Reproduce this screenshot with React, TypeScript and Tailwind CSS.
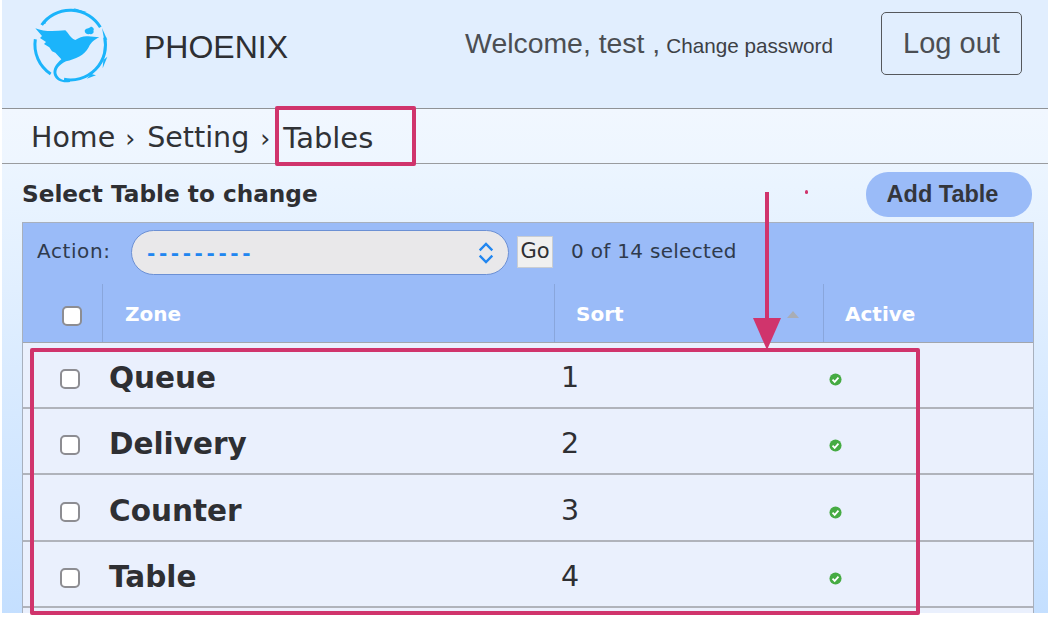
import React from "react";

const SANS = "font-['Liberation_Sans',Arial,sans-serif]";
const DEJA = "font-['DejaVu_Sans',Verdana,sans-serif]";

function Logo() {
  return (
    <svg viewBox="0 0 300 285" className="w-[100px] h-[95px] shrink-0 self-start" aria-hidden="true">
      <g fill="none" stroke="#1bb4fb" strokeWidth="9">
        <path d="M65 75 A105 105 0 0 1 241 82" />
        <path d="M254 112 A105 105 0 0 1 132 238" />
        <path d="M46 118 A105 105 0 0 0 92 222" />
      </g>
      <g fill="#1bb4fb">
        <path d="M160 24 L200 36 L176 36 Z" />
        <path d="M246 84 L262 120 L252 116 Z" />
        <path d="M262 170 L248 205 L250 180 Z" />
        <path d="M228 226 L200 236 L214 222 Z" />
        <path d="M66 70 L82 52 L76 72 Z" />
        <path d="M46 85 C72 96 103 94 136 91 C146 100 152 116 166 120 C178 112 190 108 204 109 L238 112 C224 118 214 126 206 142 C194 166 166 178 138 184 C118 194 106 208 110 222 C116 238 132 243 150 240 L150 246 C128 250 108 242 102 226 C96 208 108 192 124 178 L106 158 L96 154 L88 142 L72 132 L78 126 L60 114 L66 108 Z" />
        <path d="M194 92 C196 84 208 86 212 80 C220 80 224 88 220 92 C224 98 216 104 208 102 C202 104 194 100 194 92 Z" />
      </g>
    </svg>
  );
}

function Check() {
  return (
    <svg viewBox="0 0 14 14" className="w-[13px] h-[13px]" aria-hidden="true">
      <circle cx="7" cy="7" r="6.5" fill="#46ab43" />
      <path d="M3.8 7.2 L6.1 9.6 L10.2 4.9" fill="none" stroke="#fff" strokeWidth="1.9" />
    </svg>
  );
}

function Box() {
  return <span className="block w-[20px] h-[20px] rounded-[5px] bg-white border-2 border-[#8d8d92]" />;
}

const rows = [
  { name: "Queue", n: 1, h: "h-[66px]" },
  { name: "Delivery", n: 2, h: "h-[66px]" },
  { name: "Counter", n: 3, h: "h-[67px]" },
  { name: "Table", n: 4, h: "h-[66px]" },
];

export default function App() {
  return (
    <div className="relative h-[639px] w-[1048px] overflow-hidden bg-white pl-[2px]">
      <div className="h-[613px] overflow-hidden text-[#2e2f33] flex flex-col">
        {/* top bar */}
        <header className={`flex items-center shrink-0 h-[109px] border-b border-[#8f9296] bg-[#e1eefe] pl-[18px] pr-[26px] ${SANS}`}>
          <Logo />
          <span className="ml-[24px] mt-[-14px] text-[32px] leading-none">PHOENIX</span>
          <div className="ml-auto mt-[-22px] flex items-baseline text-[#4b4e53]">
            <span className="text-[28.4px] leading-none">Welcome, test ,</span>
            <span className="ml-[6px] text-[20.7px] leading-none text-[#3d4045]">Change password</span>
          </div>
          <button className="ml-[48px] mt-[-22px] pt-[1px] w-[141px] h-[63px] rounded-[5px] border border-[#55585c] text-[29px] text-[#4b4e53]">
            Log out
          </button>
        </header>

        {/* breadcrumb */}
        <nav className={`flex items-center shrink-0 h-[55px] pt-[4px] border-b border-[#9a9c9f] bg-gradient-to-b from-[#f1f7ff] to-[#eef6ff] pl-[29px] text-[28.5px] leading-none text-[#303236] ${DEJA}`}>
          <span>Home</span>
          <span className="ml-[10px] mr-[12px] text-[25px]">›</span>
          <span>Setting</span>
          <span className="ml-[11px] mr-[13px] text-[25px]">›</span>
          <span className="text-[29px]">Tables</span>
        </nav>

        {/* content */}
        <main className={`flex-1 px-[20px] bg-gradient-to-b from-[#ecf5ff] to-[#c4dfff] ${DEJA}`}>
          <div className="flex items-start h-[58px] pt-[8px] mr-[-4px]">
            <h1 className="mt-[10px] text-[23.2px] leading-none font-bold text-[#2e2f33]">Select Table to change</h1>
            <a className={`ml-auto flex items-center justify-center w-[166px] h-[45px] pr-[13px] rounded-[22px] bg-[#9abbf8] text-[23.5px] font-bold text-[#33363c] ${SANS}`}>
              Add Table
            </a>
          </div>

          <div className="w-[1012px] border border-[#a8b0bd] border-b-0">
            {/* action bar */}
            <div className="flex items-center h-[61px] pb-[6px] bg-[#9abbf8] pl-[14px] text-[20px]">
              <span className="w-[94px] tracking-[0.6px] text-[#2f3a4c]">Action:</span>
              <div className="relative flex items-center w-[378px] h-[45px] mt-[3px] rounded-[23px] border border-[#6c90d4] bg-[#e9e8ea] pl-[15px] text-[#2186f0]">
                <span className="mt-[2px] text-[20px] font-bold tracking-[3.6px]">---------</span>
                <svg viewBox="0 0 20 26" className="absolute right-[13px] top-[10px] w-[18px] h-[24px]" aria-hidden="true">
                  <path d="M3 10 L10 3 L17 10 M3 16 L10 23 L17 16" fill="none" stroke="#2186f0" strokeWidth="2.6" />
                </svg>
              </div>
              <button className="ml-[8px] flex items-center justify-center w-[36px] h-[32px] mt-[3px] bg-[#f0f0f0] border border-[#c9cdd3] text-[21px] text-[#2e2f33]">
                Go
              </button>
              <span className="ml-[18px] text-[#2f3a4c] tracking-[0.3px]">0 of 14 selected</span>
            </div>

            {/* header */}
            <div className="grid grid-cols-[80px_452px_269px_1fr] h-[59px] bg-[#9abbf8] border-b border-[#a2a6ad] text-[20px] font-bold text-white">
              <div className="flex items-center pl-[39px] pt-[5px] border-r border-[#89a6dc]">
                <Box />
              </div>
              <div className="flex items-center pl-[22px] pt-[2px] border-r border-[#89a6dc]">Zone</div>
              <div className="relative flex items-center pl-[21px] pt-[2px] border-r border-[#89a6dc]">
                Sort
                <span className="absolute right-[24px] top-[27px] w-0 h-0 border-x-[6px] border-x-transparent border-b-[7px] border-b-[#a9adb5]" />
              </div>
              <div className="flex items-center pl-[21px] pt-[2px]">Active</div>
            </div>

            {/* rows */}
            {rows.map((r) => (
              <div key={r.name} className={`grid grid-cols-[80px_452px_269px_1fr] ${r.h} bg-[#eaf0fd] border-b-2 border-[#b0b3bb]`}>
                <div className="flex items-center pl-[37px] pt-[8px]">
                  <Box />
                </div>
                <div className="flex items-center pl-[6px] pt-[7px] text-[29.5px] font-bold text-[#2e2f33]">{r.name}</div>
                <div className="flex items-center pl-[6px] pt-[7px] text-[28.5px] text-[#2e2f33]">{r.n}</div>
                <div className="flex items-center pl-[5px] pt-[9px]">
                  <Check />
                </div>
              </div>
            ))}
            <div className="h-[10px] bg-[#eaf0fd]" />
          </div>
        </main>
      </div>

      {/* annotations over the picture */}
      <div className="absolute left-[275px] top-[106px] w-[141px] h-[60px] rounded-[2px] border-[4px] border-[#d0346c]" />
      <div className="absolute left-[30px] top-[348px] w-[890px] h-[267px] rounded-[2px] border-[4px] border-[#d0346c]" />
      <div className="absolute left-[765px] top-[192px] w-[4px] h-[130px] bg-[#d0346c]" />
      <div className="absolute left-[753px] top-[318px] w-0 h-0 border-x-[14px] border-x-transparent border-t-[32px] border-t-[#d0346c]" />
      <div className="absolute left-[805px] top-[190px] w-[3px] h-[4px] rounded-full bg-[#d0346c]" />
    </div>
  );
}
